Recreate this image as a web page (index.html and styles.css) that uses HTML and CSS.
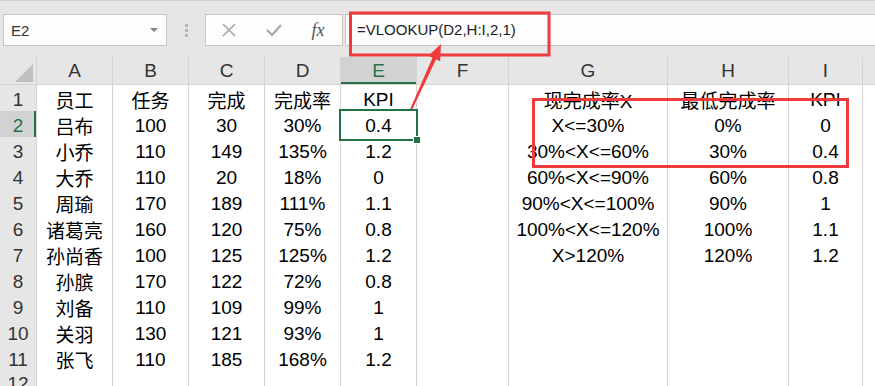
FILE: index.html
```html
<!DOCTYPE html>
<html lang="zh">
<head>
  <meta charset="UTF-8">
  <title>KPI 查找</title>
  <link rel="stylesheet" href="styles.css">
</head>
<body>

  <div class="toolbar">
    <div class="namebox">
      <span>E2</span>
      <span class="caret"></span>
    </div>
    <div class="grip"><i></i><i></i><i></i></div>
    <div class="fxbox">
      <svg class="ico" width="14" height="14" viewBox="0 0 14 14"><path d="M1 1 L13 13 M13 1 L1 13" stroke="#a6a6a6" stroke-width="1.6" fill="none"/></svg>
      <svg class="ico" width="16" height="14" viewBox="0 0 16 14"><path d="M1 7 L6 12 L15 2" stroke="#a6a6a6" stroke-width="2.2" fill="none"/></svg>
      <span class="fx">fx</span>
    </div>
    <div class="formula">=VLOOKUP(D2,H:I,2,1)</div>
  </div>

  <div class="sheet">
    <div class="row head">
      <div class="corner"><span></span></div>
      <div class="ch">A</div><div class="ch">B</div><div class="ch">C</div><div class="ch">D</div>
      <div class="ch sel">E</div><div class="ch">F</div><div class="ch">G</div><div class="ch">H</div>
      <div class="ch">I</div><div class="ch"></div>
    </div>
    <div class="row">
      <div class="rh">1</div>
      <div class="c">员工</div><div class="c">任务</div><div class="c">完成</div><div class="c">完成率</div><div class="c">KPI</div>
      <div class="c"></div><div class="c">现完成率X</div><div class="c">最低完成率</div><div class="c">KPI</div><div class="c"></div>
    </div>
    <div class="row">
      <div class="rh sel">2</div>
      <div class="c">吕布</div><div class="c">100</div><div class="c">30</div><div class="c">30%</div><div class="c active">0.4</div>
      <div class="c"></div><div class="c">X&lt;=30%</div><div class="c">0%</div><div class="c">0</div><div class="c"></div>
    </div>
    <div class="row">
      <div class="rh">3</div>
      <div class="c">小乔</div><div class="c">110</div><div class="c">149</div><div class="c">135%</div><div class="c">1.2</div>
      <div class="c"></div><div class="c">30%&lt;X&lt;=60%</div><div class="c">30%</div><div class="c">0.4</div><div class="c"></div>
    </div>
    <div class="row">
      <div class="rh">4</div>
      <div class="c">大乔</div><div class="c">110</div><div class="c">20</div><div class="c">18%</div><div class="c">0</div>
      <div class="c"></div><div class="c">60%&lt;X&lt;=90%</div><div class="c">60%</div><div class="c">0.8</div><div class="c"></div>
    </div>
    <div class="row">
      <div class="rh">5</div>
      <div class="c">周瑜</div><div class="c">170</div><div class="c">189</div><div class="c">111%</div><div class="c">1.1</div>
      <div class="c"></div><div class="c">90%&lt;X&lt;=100%</div><div class="c">90%</div><div class="c">1</div><div class="c"></div>
    </div>
    <div class="row">
      <div class="rh">6</div>
      <div class="c">诸葛亮</div><div class="c">160</div><div class="c">120</div><div class="c">75%</div><div class="c">0.8</div>
      <div class="c"></div><div class="c">100%&lt;X&lt;=120%</div><div class="c">100%</div><div class="c">1.1</div><div class="c"></div>
    </div>
    <div class="row">
      <div class="rh">7</div>
      <div class="c">孙尚香</div><div class="c">100</div><div class="c">125</div><div class="c">125%</div><div class="c">1.2</div>
      <div class="c"></div><div class="c">X&gt;120%</div><div class="c">120%</div><div class="c">1.2</div><div class="c"></div>
    </div>
    <div class="row">
      <div class="rh">8</div>
      <div class="c">孙膑</div><div class="c">170</div><div class="c">122</div><div class="c">72%</div><div class="c">0.8</div>
      <div class="c"></div><div class="c"></div><div class="c"></div><div class="c"></div><div class="c"></div>
    </div>
    <div class="row">
      <div class="rh">9</div>
      <div class="c">刘备</div><div class="c">110</div><div class="c">109</div><div class="c">99%</div><div class="c">1</div>
      <div class="c"></div><div class="c"></div><div class="c"></div><div class="c"></div><div class="c"></div>
    </div>
    <div class="row">
      <div class="rh">10</div>
      <div class="c">关羽</div><div class="c">130</div><div class="c">121</div><div class="c">93%</div><div class="c">1</div>
      <div class="c"></div><div class="c"></div><div class="c"></div><div class="c"></div><div class="c"></div>
    </div>
    <div class="row">
      <div class="rh">11</div>
      <div class="c">张飞</div><div class="c">110</div><div class="c">185</div><div class="c">168%</div><div class="c">1.2</div>
      <div class="c"></div><div class="c"></div><div class="c"></div><div class="c"></div><div class="c"></div>
    </div>
    <div class="row">
      <div class="rh">12</div>
      <div class="c"></div><div class="c"></div><div class="c"></div><div class="c"></div><div class="c"></div>
      <div class="c"></div><div class="c"></div><div class="c"></div><div class="c"></div><div class="c"></div>
    </div>
  </div>

  <!-- red annotation: boxes around the formula and the lookup range, arrow from E2 -->
  <svg class="marks" width="875" height="386" viewBox="0 0 875 386">
    <rect x="350.5" y="13" width="198.5" height="42" fill="none" stroke="#ef3b3b" stroke-width="3"/>
    <rect x="533.5" y="99.5" width="314" height="67" fill="none" stroke="#ef3b3b" stroke-width="3"/>
    <polygon points="400.6,131 432.5,57.7 428.4,55.8 441,44 440.2,61.2 436.1,59.3 401.8,131.4" fill="#ef3b3b"/>
  </svg>

</body>
</html>
```

FILE: styles.css
```css
body {
  margin: 0;
  width: 875px;
  height: 386px;
  overflow: hidden;
  position: relative;
  background: #fff;
  font-family: "Liberation Sans", "Noto Sans CJK SC", sans-serif;
}

/* formula bar */
.toolbar {
  height: 57px;
  box-sizing: border-box;
  background: #e6e6e6;
  border-top: 1px solid #d2d2d2;
  padding-top: 13px;
  display: flex;
  align-items: flex-start;
}

.namebox {
  margin-left: 3px;
  width: 164px;
  height: 32px;
  box-sizing: border-box;
  border: 1px solid #c6c6c6;
  background: #fdfdfd;
  display: flex;
  align-items: center;
  justify-content: space-between;
  padding: 0 8px 0 7px;
  font-size: 15px;
  color: #333;
}

.caret {
  width: 0;
  height: 0;
  border-left: 4px solid transparent;
  border-right: 4px solid transparent;
  border-top: 4px solid #808080;
}

.grip {
  width: 38px;
  height: 32px;
  display: flex;
  flex-direction: column;
  align-items: center;
  justify-content: center;
  gap: 2px;
}

.grip i {
  width: 3px;
  height: 3px;
  background: #b4b4b4;
}

.fxbox {
  width: 138px;
  height: 32px;
  box-sizing: border-box;
  border: 1px solid #c6c6c6;
  background: #fdfdfd;
  display: grid;
  grid-template-columns: 46px 44px 44px;
  align-items: center;
  justify-items: center;
}

.fx {
  font-family: "Liberation Serif", serif;
  font-style: italic;
  font-size: 18px;
  color: #555;
}

.formula {
  flex: 1;
  margin-left: 2px;
  margin-right: -2px;
  height: 32px;
  box-sizing: border-box;
  border: 1px solid #c6c6c6;
  background: #fdfdfd;
  padding-left: 11px;
  line-height: 30px;
  font-size: 15px;
  color: #222;
}

/* worksheet grid */
.sheet {
  display: grid;
  row-gap: 1px;
  background: #d4d4d4;
}

.row {
  display: grid;
  grid-template-columns: 36px 75px 75px 75px 75px 75px 91px 158px 120px 73px 1fr;
  column-gap: 1px;
  height: 25px;
}

.row.head {
  height: 27px;
}

.c, .ch, .rh, .corner {
  display: flex;
  align-items: center;
  justify-content: center;
  font-size: 19px;
  white-space: nowrap;
  padding-top: 1px;
}

.c {
  background: #fff;
  color: #000;
  position: relative;
}

.ch, .rh, .corner {
  background: #e6e6e6;
  color: #333;
}

.corner {
  position: relative;
}

.corner span {
  position: absolute;
  right: 3px;
  bottom: 2px;
  width: 0;
  height: 0;
  border-left: 18px solid transparent;
  border-bottom: 18px solid #c0c0c0;
}

.ch.sel {
  background: #d2d2d2;
  color: #217346;
  box-shadow: inset 0 -2px #217346;
}

.rh.sel {
  background: #d2d2d2;
  color: #217346;
  box-shadow: inset -2px 0 #217346;
}

.c.active {
  outline: 2px solid #217346;
  z-index: 1;
}

.c.active::after {
  content: "";
  position: absolute;
  right: -5px;
  bottom: -5px;
  width: 6px;
  height: 6px;
  background: #217346;
  border: 1px solid #fff;
}

.marks {
  position: absolute;
  left: 0;
  top: 0;
  pointer-events: none;
}
```
